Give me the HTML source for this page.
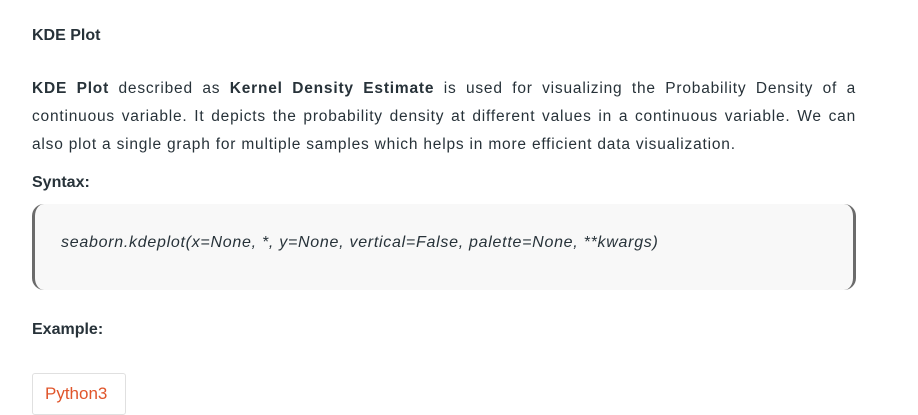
<!DOCTYPE html>
<html><head><style>
body{margin:0;background:#fff;font-family:"Liberation Sans",sans-serif;color:#273239;}
.h{position:absolute;left:32px;font-weight:bold;font-size:16px;}
p{position:absolute;left:32px;width:824px;margin:0;font-size:15.5px;line-height:28px;text-align:justify;letter-spacing:0.8px}
.code{position:absolute;left:32px;top:204px;width:818px;height:86px;background:#f8f8f8;border-left:3px solid #6b6b6b;border-right:3px solid #6b6b6b;border-radius:12px;}
.code span{position:absolute;left:26px;top:30px;font-style:italic;font-size:16px;letter-spacing:0.72px;color:#273239;}
.btn{position:absolute;left:32px;top:373px;width:92px;height:40px;border:1px solid #e0e0e0;border-radius:3px;color:#e0552b;font-size:17px;}
.btn span{position:absolute;left:12px;top:10px}
</style></head><body>
<div class="h" style="top:27px">KDE Plot</div>
<p style="top:75px"><b>KDE Plot</b> described as <b>Kernel Density Estimate</b> is used for visualizing the Probability Density of a continuous variable. It depicts the probability density at different values in a continuous variable. We can also plot a single graph for multiple samples which helps in more efficient data visualization.</p>
<div class="h" style="top:174px">Syntax:</div>
<div class="code"><span>seaborn.kdeplot(x=None, *, y=None, vertical=False, palette=None, **kwargs)</span></div>
<div class="h" style="top:321px">Example:</div>
<div class="btn"><span>Python3</span></div>
</body></html>
